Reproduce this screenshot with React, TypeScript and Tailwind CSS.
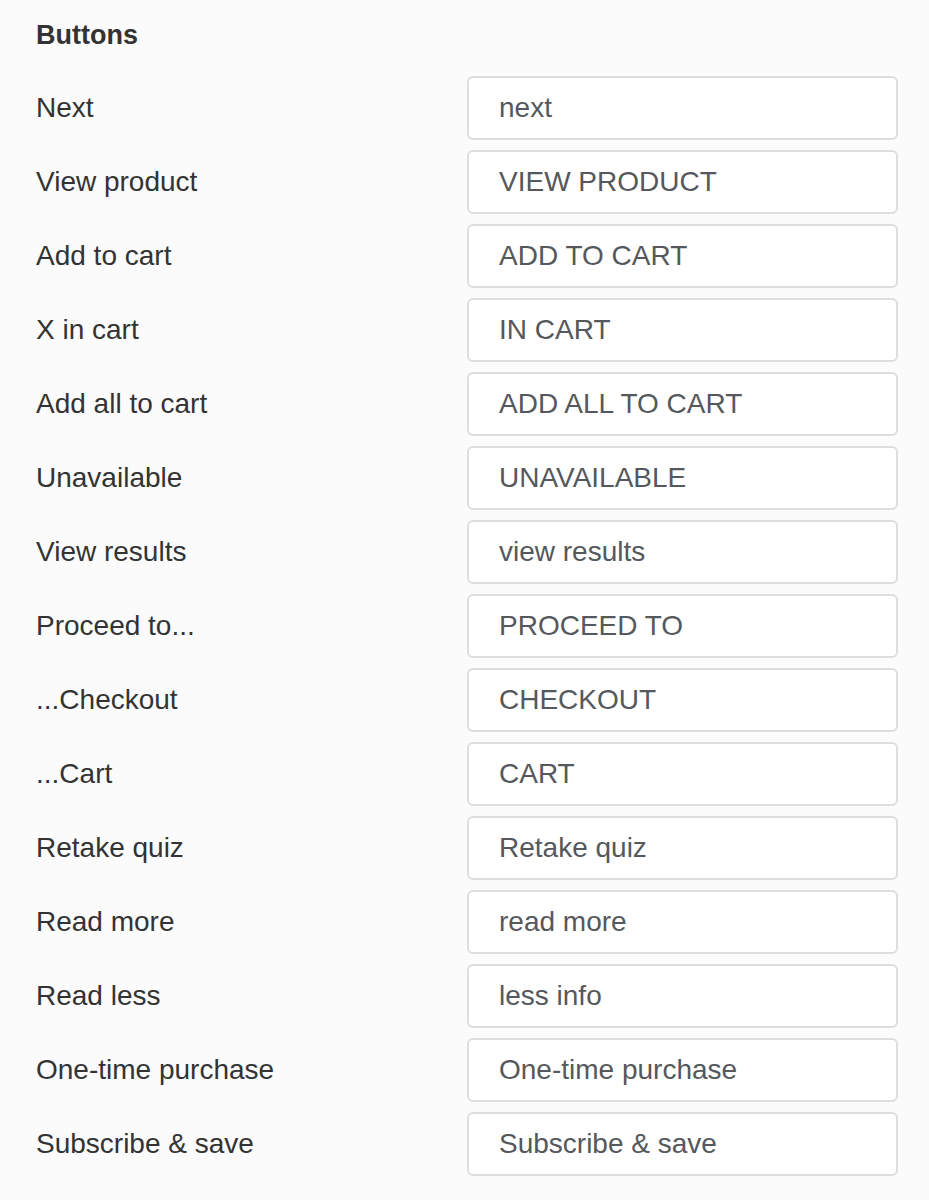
import React from "react";

const rows: [string, string][] = [
  ["Next", "next"],
  ["View product", "VIEW PRODUCT"],
  ["Add to cart", "ADD TO CART"],
  ["X in cart", "IN CART"],
  ["Add all to cart", "ADD ALL TO CART"],
  ["Unavailable", "UNAVAILABLE"],
  ["View results", "view results"],
  ["Proceed to...", "PROCEED TO"],
  ["...Checkout", "CHECKOUT"],
  ["...Cart", "CART"],
  ["Retake quiz", "Retake quiz"],
  ["Read more", "read more"],
  ["Read less", "less info"],
  ["One-time purchase", "One-time purchase"],
  ["Subscribe & save", "Subscribe & save"],
];

export default function App() {
  return (
    <div
      className="min-h-screen bg-[#fbfbfb] pl-[36px] pr-[31px] pt-[19px] pb-[24px]"
      style={{ fontFamily: '"Liberation Sans", Arial, sans-serif' }}
    >
      <h2 className="text-[27px] leading-[32px] font-bold text-[#333333]">Buttons</h2>
      <div className="mt-[25px] flex flex-col gap-[10px]">
        {rows.map(([label, value]) => (
          <div key={label} className="grid grid-cols-2 items-center">
            <div className="text-[28px] leading-[32px] text-[#333333] pb-[1px]">{label}</div>
            <div className="h-[64px] flex items-center rounded-[6px] border-2 border-[#dddde2] bg-white pl-[30px] text-[28px] leading-[32px] text-[#55585c] pb-[1px]">
              {value}
            </div>
          </div>
        ))}
      </div>
    </div>
  );
}
